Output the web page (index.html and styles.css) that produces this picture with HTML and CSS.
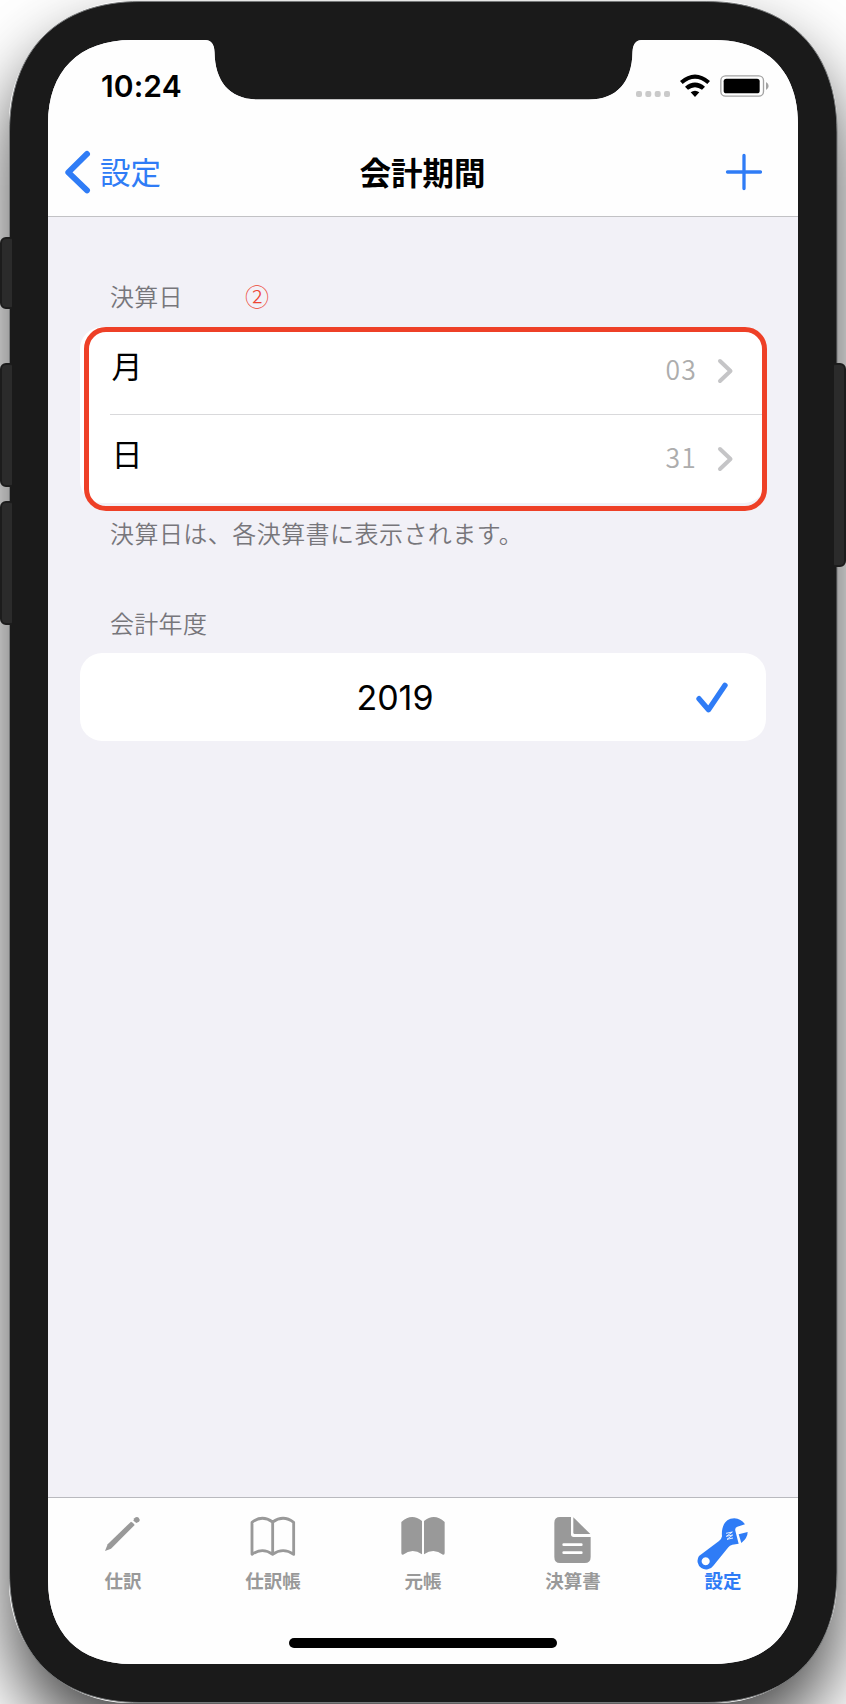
FILE: index.html
```html
<!DOCTYPE html>
<html lang="ja">
<head>
<meta charset="utf-8">
<title>会計期間</title>
<link rel="stylesheet" href="styles.css">
</head>
<body>
<div class="stage">
  <div class="shadow"></div>
  <i class="key key-mute"></i><i class="key key-up"></i><i class="key key-down"></i><i class="key key-power"></i>
  <div class="screen">
    <header class="top">
      <div class="status">
        <span class="time">10:24</span>
        <span class="signals">
          <svg class="dots" viewBox="0 0 34 6"><g fill="#cacaca"><rect width="6" height="6" rx="2"/><rect x="9.3" width="6" height="6" rx="2"/><rect x="18.7" width="6" height="6" rx="2"/><rect x="28" width="6" height="6" rx="2"/></g></svg>
          <svg class="wifi" viewBox="772 222 90 69"><path d="M772 243Q817 204 862 243L854 252Q817 221 780 252ZM787 260Q817 235 847 260L838 269Q817 254 796 269ZM804 277Q817 267 830 277L817 291Z"/></svg>
          <svg class="battery" viewBox="893 225 147 66"><rect x="895.5" y="227.500" width="128" height="61" rx="14" fill="none" stroke="#a3a3a3" stroke-width="4"/><rect x="904" y="236" width="108" height="44" rx="8"/><path d="M1031 246q8 4 8 12t-8 12z" fill="#a3a3a3"/></svg>
        </span>
      </div>
      <nav class="nav">
        <a class="back"><svg viewBox="196 452 76 128"><path d="M263 461L206 517L263 572" fill="none" stroke="#2f7cf6" stroke-width="18" stroke-linecap="round" stroke-linejoin="round"/></svg><span>設定</span></a>
        <h1>会計期間</h1>
        <a class="add"><svg viewBox="0 0 36 36"><path d="M18 1.500V34.500M1.500 18H34.500" stroke="#2f7cf6" stroke-width="3.300" stroke-linecap="round"/></svg></a>
      </nav>
    </header>
    <main>
      <h2 class="caption first">決算日<span class="mark">②</span></h2>
      <div class="card dates">
        <div class="row"><span class="label">月</span><span class="value">03</span><svg class="chev" viewBox="0 0 15 24"><path d="M2 2L12.500 12L2 22" fill="none" stroke="#c5c5c7" stroke-width="4" stroke-linecap="round" stroke-linejoin="round"/></svg></div>
        <div class="row"><span class="label">日</span><span class="value">31</span><svg class="chev" viewBox="0 0 15 24"><path d="M2 2L12.500 12L2 22" fill="none" stroke="#c5c5c7" stroke-width="4" stroke-linecap="round" stroke-linejoin="round"/></svg></div>
        <div class="ring"></div>
      </div>
      <p class="caption note">決算日は、各決算書に表示されます。</p>
      <h2 class="caption second">会計年度</h2>
      <div class="card year"><span>2019</span><svg viewBox="228 127 96 93"><path d="M237 177L265.500 210L315 137" fill="none" stroke="#2f7cf6" stroke-width="16" stroke-linecap="round" stroke-linejoin="round"/></svg></div>
    </main>
    <footer>
      <div class="tabs">
        <div class="tab"><svg viewBox="174 105 150 165"><g fill="#999"><path d="M195 213L203 193L273 125Q280 127 284 135L213 206Z"/><path d="M280 122L283 115Q290 108 296 113Q302 119 297 125L289 129Z"/></g></svg><span>仕訳</span></div>
        <div class="tab"><svg viewBox="624 105 150 165"><path d="M698 126Q666 103 636 127V223Q667 201 698 223Q729 201 761 223V127Q730 103 698 126V223" fill="none" stroke="#999" stroke-width="8.500" stroke-linejoin="round"/></svg><span>仕訳帳</span></div>
        <div class="tab"><svg viewBox="1074 105 150 165"><g fill="#999"><path d="M1084 126Q1115 97 1146 123V223Q1117 203 1089 224Q1084 225 1084 219Z"/><path d="M1152 123Q1183 97 1214 126V219Q1214 225 1209 224Q1181 203 1152 223Z"/></g></svg><span>元帳</span></div>
        <div class="tab"><svg viewBox="355 105 150 165"><g fill="#999"><path d="M391 111H424V163Q424 171 432 171H483V231Q483 249 465 249H391Q374 249 374 231V128Q374 111 391 111Z"/><path d="M431 112L482 162H435Q431 162 431 158Z"/></g><path d="M402 194H455M402 218H455" stroke="#fff" stroke-width="8" stroke-linecap="round"/></svg><span>決算書</span></div>
        <div class="tab on"><svg viewBox="805 105 150 165"><g fill="#2f7cf6"><path fill-rule="evenodd" d="M808 228L868 183Q876 177 877 169C874 140 887 115 914 115Q934 116 946 133L923 140Q915 143 917 152L927 191L908 194Q900 196 896 202L851 257A25 25 0 1 1 808 228ZM828 232a12 12 0 1 0 .1 0Z"/><path d="M927 163L954 156Q954 174 935 189Z"/></g><path d="M889 160L908 156L890 169L909 165L892 178L910 174" fill="none" stroke="#fff" stroke-width="2.600"/></svg><span>設定</span></div>
      </div>
      <div class="home"></div>
    </footer>
  </div>
  <svg class="bezel" viewBox="0 0 846 1704">
    <path fill="#1a1a1a" stroke="#77797a" stroke-width="1" d="M9.500 132C9.500 50 58 1.500 140 1.500H706.500C788.500 1.500 837 50 837 132V1572C837 1654 788.500 1702.500 706.500 1702.500H140C58 1702.500 9.500 1654 9.500 1572Z"/>
  </svg>
</div>
</body>
</html>
```

FILE: styles.css
```css
* { box-sizing: border-box; }
body { margin: 0; background: #fff; font-family: Inter, "Noto Sans CJK JP", sans-serif; }
svg { display: block; overflow: visible; }
h1, h2, p { margin: 0; font-weight: 400; }

.stage { position: relative; width: 846px; height: 1704px; padding: 40px 48px; overflow: hidden; isolation: isolate; }
.shadow { position: absolute; inset: 1px 9px; border-radius: 120px; box-shadow: 0 38px 70px rgba(0,0,0,.72); z-index: -3; }
.bezel { position: absolute; inset: 0; width: 846px; height: 1704px; z-index: -1; }
.key { position: absolute; left: 0; width: 16px; background: #2b2b2b; border: 2px solid #1c1c1c; border-radius: 6px; z-index: 1; clip-path: inset(0 4px 0 0); }
.key-mute { top: 237px; height: 72px; }
.key-up { top: 363px; height: 124px; }
.key-down { top: 501px; height: 124px; }
.key-power { top: 363px; height: 204px; left: 830px; clip-path: inset(0 0 0 4px); }

.screen {
  display: flex; flex-direction: column; width: 750px; height: 1624px; background: #f2f1f7;
  clip-path: path("M0 84C0 31 31 0 84 0H157Q166 0 166.500 12C167 42 182 59.500 210 59.500H541C569 59.500 584 42 584.500 12Q585 0 594 0H666C719 0 750 31 750 84V1540C750 1593 719 1624 666 1624H84C31 1624 0 1593 0 1540Z");
}
.top { height: 177px; background: #fefefe; border-bottom: 1px solid #c2c2c5; }
.status { display: flex; justify-content: space-between; height: 89px; padding: 28px 29px 0 53px; }
.time { font-size: 30px; line-height: 36px; font-weight: 600; letter-spacing: .1px; }
.signals { display: flex; padding-top: 6px; }
.dots { width: 34px; height: 6px; margin: 17px 10px 0 0; }
.wifi { width: 30px; height: 23px; margin-right: 10.500px; }
.battery { width: 49px; height: 22px; margin-top: 1px; }
.nav { display: grid; grid-template-columns: 1fr auto 1fr; align-items: center; height: 85px; padding: 0 36px 0 17px; }
.back { display: flex; align-items: center; gap: 10px; color: #2f7cf6; font-size: 30.500px; line-height: 44px; font-weight: 400; }
.back svg { width: 25px; height: 42px; }
.back, .nav h1, .caption, .label, .value, .tab { font-family: "Noto Sans CJK JP", sans-serif; }
.back span, .nav h1 { margin-top: -2px; }
.nav h1 { font-size: 31.500px; line-height: 44px; font-weight: 700; margin-left: 18px; }
.add { justify-self: end; }
.add svg { width: 36px; height: 36px; }

main { flex: 1; padding: 0 32px; }
.caption { padding-left: 30px; color: #77767b; font-size: 24px; line-height: 36px; font-weight: 350; letter-spacing: .3px; }
.first { margin-top: 61px; height: 49px; }
.mark { color: #ed4433; font-weight: 300; margin-left: 62px; }
.card { background: #fff; border-radius: 22px; }
.dates { position: relative; height: 176px; }
.row { display: flex; align-items: center; height: 87px; padding-right: 33px; margin-left: 30px; }
.row + .row { border-top: 1px solid #d9d9db; height: 88px; }
.label { flex: 1; font-size: 31px; line-height: 44px; margin-top: -11px; padding-left: 1.500px; font-weight: 400; }
.value { font-size: 26.500px; line-height: 40px; color: #adadad; letter-spacing: 1.200px; font-weight: 350; margin: -4px 21px 0 0; }
.chev { width: 15px; height: 24px; }
.ring { position: absolute; left: 4px; top: 0; width: 682.500px; height: 183.500px; border: 5px solid #ee4027; border-radius: 22px; }
.note { margin-top: 12px; letter-spacing: .45px; }
.second { margin-top: 54px; height: 48px; }
.year { display: flex; align-items: center; height: 88px; padding-right: 38px; font-size: 34px; }
.year span { flex: 1; text-align: center; padding: 0 0 0 14px; }
.year svg { width: 32px; height: 31px; margin-top: 1px; }

footer { height: 167px; background: #fefefe; border-top: 1px solid #b9b9be; }
.tabs { display: grid; grid-template-columns: repeat(5, 1fr); height: 140px; padding-top: 17px; }
.tab { display: flex; flex-direction: column; align-items: center; color: #999; font-size: 18.500px; line-height: 26px; font-weight: 700; }
.tab svg { width: 50px; height: 55px; margin-bottom: -3px; }
.on { color: #2f7cf6; }
.home { width: 268px; height: 10px; margin: 0 auto; border-radius: 5px; background: #000; }
```
